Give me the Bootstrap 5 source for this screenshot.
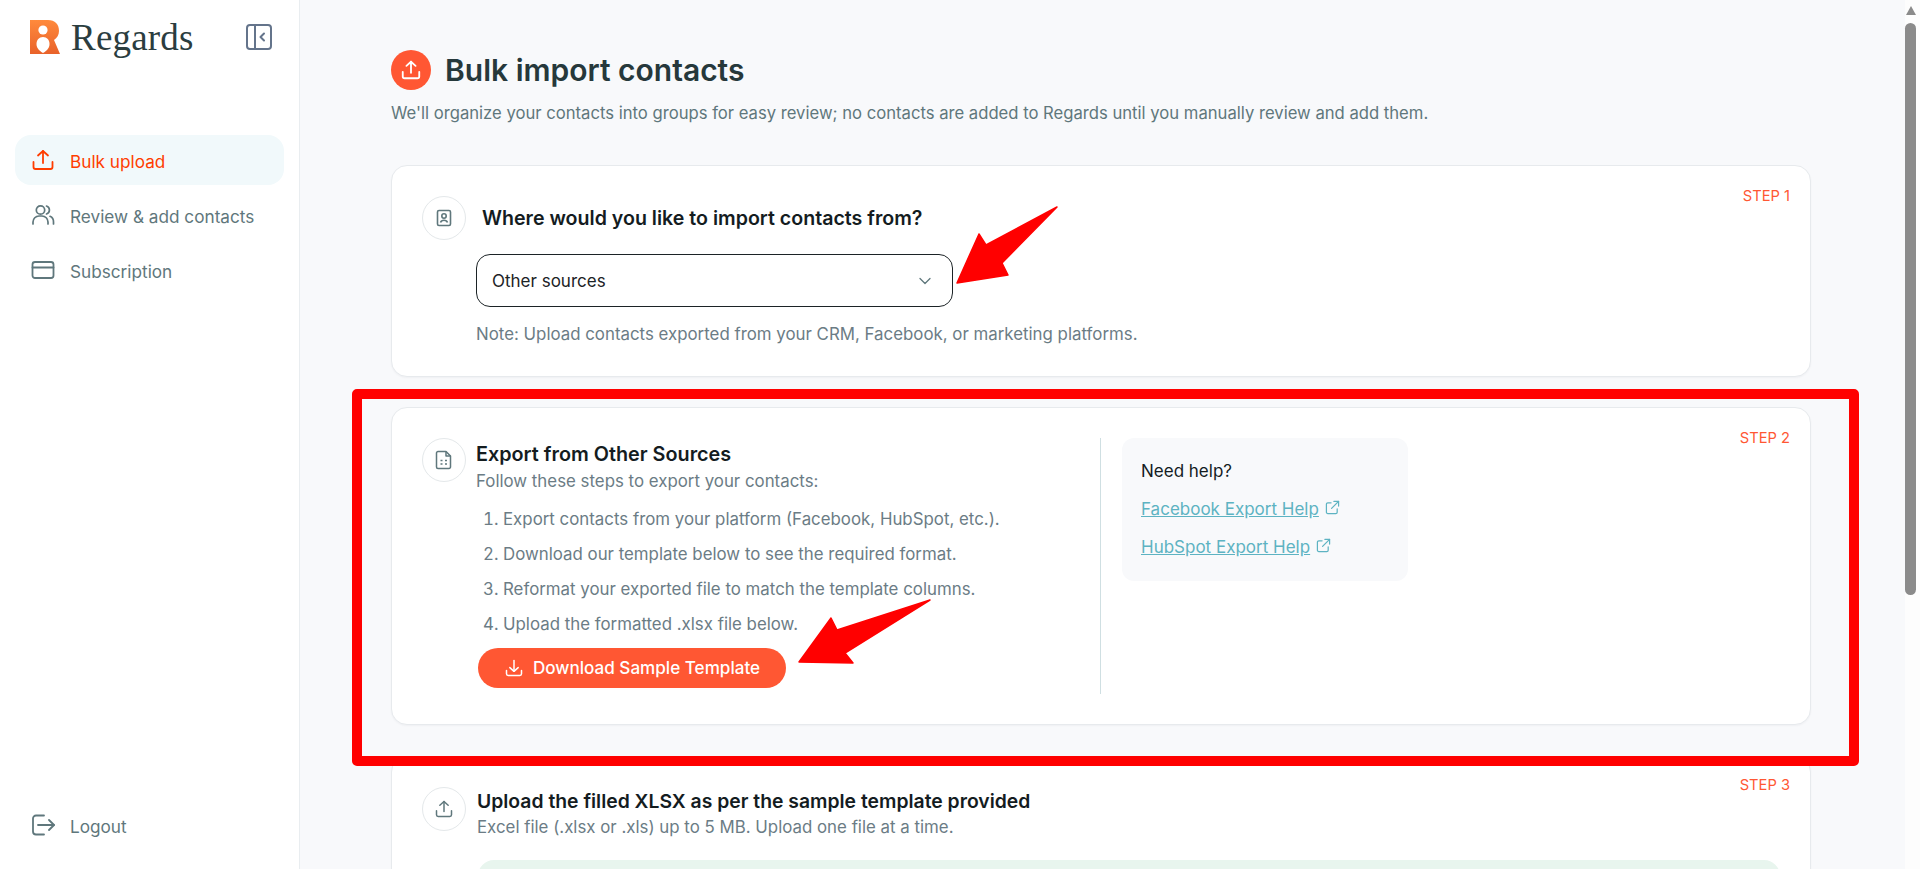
<!DOCTYPE html>
<html lang="en">
<head>
    <meta charset="UTF-8">
    <meta name="viewport" content="width=device-width, initial-scale=1.0">
    <title>Regards - Bulk import contacts</title>
    <link href="https://cdn.jsdelivr.net/npm/bootstrap@5.3.0/dist/css/bootstrap.min.css" rel="stylesheet">
    <script src="https://cdn.jsdelivr.net/npm/bootstrap@5.3.0/dist/js/bootstrap.bundle.min.js"></script>
    <style>
        html, body { height: 100%; overflow: hidden; }
        body { font-family: Inter, "Liberation Sans", sans-serif; background: #f8f9fb; color: #141c1f; }
        .app-shell { height: 100vh; position: relative; }

        /* sidebar */
        .side-bar { width: 300px; flex: none; background: #fff; border-right: 1px solid #e9edf0; padding: 20px 15px 19px; }
        .brand-row { height: 34px; padding-left: 15px; padding-right: 12px; margin-bottom: 81px; }
        .brand-name { font-family: "Liberation Serif", serif; font-size: 37px; line-height: 36px; color: #2b3d3f; letter-spacing: .2px; margin-left: 11px; padding-top: 2px; }
        .side-link { height: 50px; padding-left: 16px; gap: 15px; border-radius: 16px; color: #5f777c; text-decoration: none; font-size: 17.2px; margin-bottom: 5px; }
        .side-link.is-active { background: #f1f9fb; color: #ff3d00; }
        .side-link svg { width: 24px; height: 24px; flex: none; }
        .side-link span { padding-top: 3px; }

        /* main column */
        .main-pane { min-width: 0; padding: 50px 94px 0 91px; overflow: hidden; }
        .page-icon { width: 40px; height: 40px; border-radius: 50%; background: #ff5733; }
        .page-title { font-size: 30px; font-weight: 600; color: #26383b; margin: 0 0 0 14px; line-height: 40px; }
        .page-sub { font-size: 16.65px; color: #5f777c; margin: 11px 0 40px; line-height: 24px; }

        .step-card { background: #fff; border: 1px solid #e7eaed; border-radius: 16px; padding: 30px; margin-bottom: 31px; position: relative; box-shadow: 0 1px 2px rgba(20, 30, 40, .04); }
        .first-step { margin-bottom: 30px; }
        .step-tag { position: absolute; top: 21px; right: 20px; font-size: 14.7px; color: #ff5733; line-height: 18px; }
        .last-tag { top: 19px; }
        .round-icon { width: 44px; height: 44px; border-radius: 50%; border: 1px solid #e4e8ea; flex: none; background: #fff; }
        .step-title { font-size: 19.6px; font-weight: 600; color: #141c1f; line-height: 28px; margin: 0; }
        .export-title { font-size: 19.8px; margin-bottom: 1px; }
        .upload-title { font-size: 19.35px; }
        .step-text { font-size: 16.85px; color: #6b7c85; line-height: 24px; margin: 0; }

        .source-select { width: 477px; height: 53px; margin: 14px 0 15px 54px; border: 1.5px solid #1c2326; border-radius: 14px; background: #fff; padding: 0 16px 0 15px; font-size: 17px; color: #1c2326; }
        .source-select span { padding-top: 3px; }
        .note-line { margin-left: 54px; }

        .step-list { padding: 0 0 0 27px; margin: 9px 0 6px; font-size: 16.85px; color: #6b7c85; }
        .step-list li { height: 35px; line-height: 35px; }
        .download-btn { width: 308px; height: 40px; border-radius: 20px; background: #ff5733; color: #fff; border: 0; font-size: 17.1px; font-weight: 500; gap: 9px; margin-left: 2px; }
        .download-btn:hover { background: #ff5733; color: #fff; }

        .export-left { width: 634px; flex: none; padding: 2px 0 0 10px; }
        .upload-head { padding-left: 11px; }
        .help-split { border-left: 1px solid #cfdfe2; height: 256px; padding-left: 21px; }
        .help-box { width: 286px; height: 143px; background: #f8f9fb; border-radius: 12px; padding: 21px 19px; }
        .help-box p { font-size: 17px; color: #141c1f; margin: 0 0 14px; line-height: 24px; }
        .help-link { font-size: 17px; color: #5db3c2; line-height: 24px; margin-bottom: 14px; gap: 6px; }
        .help-link a { color: #5db3c2; }
        .help-link svg { margin-top: -3px; }

        .green-box { height: 120px; margin: 21px 0 0 56px; background: #e8f5ee; border-radius: 16px; }

        /* fake browser scrollbar */
        .scroll-rail { width: 15px; flex: none; background: #fdfdfd; position: relative; }
        .scroll-arrow { position: absolute; top: 6px; left: 1px; width: 0; height: 0; border-left: 5.5px solid transparent; border-right: 5.5px solid transparent; border-bottom: 9px solid #8b8b8b; }
        .scroll-thumb { position: absolute; top: 23px; left: 0; width: 11px; height: 572px; background: #8b8b8b; border-radius: 5.5px; }

        /* annotations on top of the screenshot */
        .mark-box { position: absolute; left: 352px; top: 389px; width: 1507px; height: 377px; border: 10px solid #ff0000; border-radius: 5px; pointer-events: none; }
        .mark-arrows { position: absolute; left: 0; top: 0; width: 1920px; height: 869px; pointer-events: none; }
    </style>
</head>
<body>
<div class="app-shell d-flex">
    <!-- Sidebar -->
    <aside class="side-bar d-flex flex-column">
        <div class="brand-row d-flex align-items-center">
            <svg width="30" height="34" viewBox="0 0 30 34">
                <defs>
                    <linearGradient id="logoFill" x1="0" y1="0" x2="0" y2="1">
                        <stop offset="0" stop-color="#ff8a3c"/>
                        <stop offset="1" stop-color="#e9622a"/>
                    </linearGradient>
                </defs>
                <path d="M0 0H18C25 0 29 4 29 11C29 15 27 18 24 20L30 34H0Z" fill="url(#logoFill)"/>
                <circle cx="13" cy="10" r="4.6" fill="#fff"/>
                <path d="M13 33C8 30 6.500 27 6.500 24C6.500 20 9 17 13 17C17 17 19.500 20 19.500 24C19.500 27 18 30 13 33Z" fill="#fff"/>
            </svg>
            <span class="brand-name">Regards</span>
            <svg class="ms-auto" width="26" height="26" viewBox="0 0 26 26" fill="none" stroke="#64748b" stroke-width="2">
                <rect x="1" y="1" width="24" height="24" rx="3"/>
                <path d="M9 1V25"/>
                <path d="M18 9.5L14.5 13L18 16.5" stroke-linecap="round" stroke-linejoin="round"/>
            </svg>
        </div>
        <a class="side-link is-active d-flex align-items-center" href="#">
            <svg viewBox="0 0 24 24" fill="none" stroke="#ff3d00" stroke-width="1.8" stroke-linecap="round" stroke-linejoin="round"><path d="M12 15V3"/><path d="M7 7.5L12 3l5 4.5"/><path d="M2.5 14v5a2 2 0 0 0 2 2h15a2 2 0 0 0 2-2v-5"/></svg>
            <span>Bulk upload</span>
        </a>
        <a class="side-link d-flex align-items-center" href="#">
            <svg viewBox="0 0 24 24" fill="none" stroke="#5f777c" stroke-width="1.7" stroke-linecap="round" stroke-linejoin="round"><circle cx="9.5" cy="7" r="4.2"/><path d="M2 21v-2a6 6 0 0 1 6-6h3a6 6 0 0 1 6 6v2"/><path d="M15.5 3a4.2 4.2 0 0 1 0 8"/><path d="M19 13.3a6 6 0 0 1 3.5 5.7v2"/></svg>
            <span>Review &amp; add contacts</span>
        </a>
        <a class="side-link d-flex align-items-center" href="#">
            <svg viewBox="0 0 24 24" fill="none" stroke="#5f777c" stroke-width="1.8" stroke-linecap="round" stroke-linejoin="round"><rect x="1.5" y="4" width="21" height="16" rx="2.5"/><path d="M1.5 9.5h21"/></svg>
            <span>Subscription</span>
        </a>
        <a class="side-link d-flex align-items-center mt-auto mb-0" href="#">
            <svg viewBox="0 0 24 24" fill="none" stroke="#5f777c" stroke-width="1.8" stroke-linecap="round" stroke-linejoin="round"><path d="M13 2.5H5a3 3 0 0 0-3 3v13a3 3 0 0 0 3 3h8"/><path d="M7 12h16"/><path d="M18 7l5 5-5 5"/></svg>
            <span>Logout</span>
        </a>
    </aside>

    <!-- Main -->
    <main class="main-pane flex-grow-1">
        <div class="d-flex align-items-center">
            <div class="page-icon d-flex align-items-center justify-content-center">
                <svg width="22" height="22" viewBox="0 0 24 24" fill="none" stroke="#fff" stroke-width="2" stroke-linecap="round" stroke-linejoin="round"><path d="M12 15V3"/><path d="M7 7.5L12 3l5 4.5"/><path d="M3 14v5a2 2 0 0 0 2 2h14a2 2 0 0 0 2-2v-5"/></svg>
            </div>
            <h1 class="page-title">Bulk import contacts</h1>
        </div>
        <p class="page-sub">We'll organize your contacts into groups for easy review; no contacts are added to Regards until you manually review and add them.</p>

        <!-- Step 1 -->
        <section class="step-card first-step">
            <span class="step-tag">STEP 1</span>
            <div class="d-flex align-items-center gap-3">
                <div class="round-icon d-flex align-items-center justify-content-center">
                    <svg width="18" height="18" viewBox="0 0 18 18" fill="none" stroke="#5f777c" stroke-width="1.6"><rect x="2.5" y="1.5" width="13" height="15" rx="1.5"/><circle cx="9" cy="7" r="2.2"/><path d="M5.5 13.5c.6-1.8 2-2.3 3.5-2.3s2.9.5 3.5 2.3"/></svg>
                </div>
                <h2 class="step-title">Where would you like to import contacts from?</h2>
            </div>
            <div class="source-select d-flex align-items-center justify-content-between">
                <span>Other sources</span>
                <svg class="me-1" width="14" height="14" viewBox="0 0 14 14" fill="none" stroke="#5f777c" stroke-width="1.3" stroke-linecap="round" stroke-linejoin="round"><path d="M2 4.5L7 9.5l5-5"/></svg>
            </div>
            <p class="step-text note-line">Note: Upload contacts exported from your CRM, Facebook, or marketing platforms.</p>
        </section>

        <!-- Step 2 -->
        <section class="step-card">
            <span class="step-tag">STEP 2</span>
            <div class="d-flex">
                <div class="round-icon d-flex align-items-center justify-content-center">
                    <svg width="18" height="20" viewBox="0 0 18 20" fill="none" stroke="#5f777c" stroke-width="1.5" stroke-linejoin="round"><path d="M3 1.5h8l4.5 4.5v11a1.5 1.5 0 0 1-1.500 1.500H3A1.500 1.500 0 0 1 1.500 17V3A1.500 1.500 0 0 1 3 1.500Z"/><path d="M11 1.500V6h4.500"/><path d="M5.500 10.500h2M10 10.500h2M5.500 14h2M10 14h2"/></svg>
                </div>
                <div class="export-left">
                    <h2 class="step-title export-title">Export from Other Sources</h2>
                    <p class="step-text">Follow these steps to export your contacts:</p>
                    <ol class="step-list">
                        <li>Export contacts from your platform (Facebook, HubSpot, etc.).</li>
                        <li>Download our template below to see the required format.</li>
                        <li>Reformat your exported file to match the template columns.</li>
                        <li>Upload the formatted .xlsx file below.</li>
                    </ol>
                    <button class="download-btn btn d-flex align-items-center justify-content-center" type="button">
                        <svg width="20" height="20" viewBox="0 0 24 24" fill="none" stroke="#fff" stroke-width="1.8" stroke-linecap="round" stroke-linejoin="round"><path d="M12 3v13"/><path d="M7 11.500l5 4.500 5-4.500"/><path d="M3 15v4a2 2 0 0 0 2 2h14a2 2 0 0 0 2-2v-4"/></svg>
                        Download Sample Template
                    </button>
                </div>
                <div class="help-split">
                    <div class="help-box">
                        <p>Need help?</p>
                        <div class="help-link d-flex align-items-center"><a href="#">Facebook Export Help</a><svg width="15" height="15" viewBox="0 0 16 16" fill="none" stroke="#5db3c2" stroke-width="1.3" stroke-linecap="round" stroke-linejoin="round"><path d="M13 9.500V13a1.500 1.500 0 0 1-1.500 1.500H3A1.500 1.500 0 0 1 1.500 13V4.500A1.500 1.500 0 0 1 3 3h3.500"/><path d="M9.500 1.500h5v5"/><path d="M14.500 1.500L7 9"/></svg></div>
                        <div class="help-link d-flex align-items-center"><a href="#">HubSpot Export Help</a><svg width="15" height="15" viewBox="0 0 16 16" fill="none" stroke="#5db3c2" stroke-width="1.3" stroke-linecap="round" stroke-linejoin="round"><path d="M13 9.500V13a1.500 1.500 0 0 1-1.500 1.500H3A1.500 1.500 0 0 1 1.500 13V4.500A1.500 1.500 0 0 1 3 3h3.500"/><path d="M9.500 1.500h5v5"/><path d="M14.500 1.500L7 9"/></svg></div>
                    </div>
                </div>
            </div>
        </section>

        <!-- Step 3 -->
        <section class="step-card">
            <span class="step-tag last-tag">STEP 3</span>
            <div class="d-flex">
                <div class="round-icon d-flex align-items-center justify-content-center">
                    <svg width="20" height="20" viewBox="0 0 24 24" fill="none" stroke="#5f777c" stroke-width="1.8" stroke-linecap="round" stroke-linejoin="round"><path d="M12 15V3"/><path d="M7 7.500L12 3l5 4.500"/><path d="M3 14v5a2 2 0 0 0 2 2h14a2 2 0 0 0 2-2v-5"/></svg>
                </div>
                <div class="upload-head">
                    <h2 class="step-title upload-title">Upload the filled XLSX as per the sample template provided</h2>
                    <p class="step-text">Excel file (.xlsx or .xls) up to 5 MB. Upload one file at a time.</p>
                </div>
            </div>
            <div class="green-box"></div>
        </section>
    </main>

    <div class="scroll-rail"><div class="scroll-arrow"></div><div class="scroll-thumb"></div></div>

    <!-- Red annotations -->
    <div class="mark-box"></div>
    <svg class="mark-arrows" viewBox="0 0 1920 869" fill="#ff0000">
        <path d="M1057 207L986 245L979 234L957 283L1008 275L1002 263Z" stroke="#ff0000" stroke-width="1.5" stroke-linejoin="round"/>
        <path d="M930 600L837 630L831 618L799 662L853 663L845 653Z" stroke="#ff0000" stroke-width="1.5" stroke-linejoin="round"/>
    </svg>
</div>
</body>
</html>
